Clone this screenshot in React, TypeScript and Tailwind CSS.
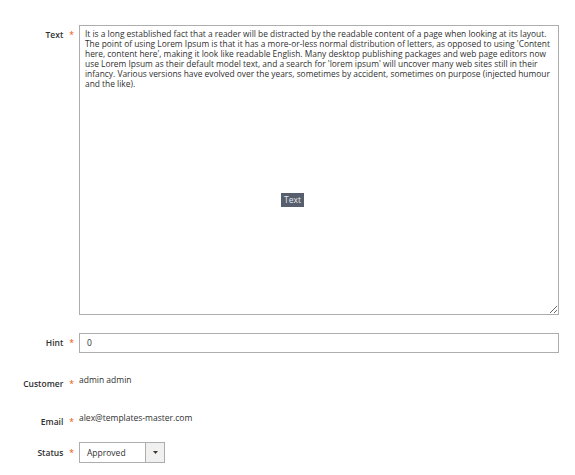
import React from 'react';

const loremText =
  "It is a long established fact that a reader will be distracted by the readable content of a page when looking at its layout. The point of using Lorem Ipsum is that it has a more-or-less normal distribution of letters, as opposed to using 'Content here, content here', making it look like readable English. Many desktop publishing packages and web page editors now use Lorem Ipsum as their default model text, and a search for 'lorem ipsum' will uncover many web sites still in their infancy. Various versions have evolved over the years, sometimes by accident, sometimes on purpose (injected humour and the like).";

interface LabelProps {
  text: string;
  className?: string;
}

const FieldLabel: React.FC<LabelProps> = ({ text, className = '' }) => (
  <div className={`w-[79px] shrink-0 flex justify-end pr-[5px] ${className}`}>
    <span className="font-semibold text-[#303030]">{text}</span>
    <span className="ml-[6px] text-[#eb5202]">*</span>
  </div>
);

const App: React.FC = () => {
  return (
    <div
      className="w-[575px] h-[475px] bg-white text-[8.5px] leading-[10px] text-[#303030] overflow-hidden"
      style={{ fontFamily: '"Open Sans", "Liberation Sans", sans-serif' }}
    >
      <div className="pt-[25px] flex flex-col">
        {/* Text */}
        <div className="flex">
          <FieldLabel text="Text" className="pt-[5px]" />
          <div className="relative">
            <textarea
              readOnly
              defaultValue={loremText}
              className="block w-[480px] h-[290px] border border-[#adadad] pl-[5px] pr-[1px] py-[3px] text-[8.4px] leading-[10px] text-[#303030] outline-none"
              style={{ fontFamily: '"Open Sans", "Liberation Sans", sans-serif' }}
            />
            <div className="absolute left-[202px] top-[168px] h-[14px] px-[3px] bg-[#575e6d] text-[#e6e8ee] text-[8.5px] leading-[14px]">
              Text
            </div>
          </div>
        </div>

        {/* Hint */}
        <div className="flex items-center mt-[18px]">
          <FieldLabel text="Hint" />
          <div className="w-[480px] h-[20px] border border-[#adadad] px-[7px] flex items-center">0</div>
        </div>

        {/* Customer */}
        <div className="flex mt-[22px]">
          <FieldLabel text="Customer" className="pt-[4px]" />
          <span>admin admin</span>
        </div>

        {/* Email */}
        <div className="flex mt-[24px]">
          <FieldLabel text="Email" className="pt-[4px]" />
          <span>alex@templates-master.com</span>
        </div>

        {/* Status */}
        <div className="flex items-center mt-[15px]">
          <FieldLabel text="Status" />
          <div className="w-[86px] h-[21px] border border-[#adadad] flex">
            <div className="flex-1 flex items-center px-[7px]">Approved</div>
            <div className="w-[19px] border-l border-[#adadad] bg-[#f0f0f0] flex items-center justify-center">
              <svg width="5" height="3" viewBox="0 0 5 3">
                <path d="M0 0 L5 0 L2.5 3 Z" fill="#41362f" />
              </svg>
            </div>
          </div>
        </div>
      </div>
    </div>
  );
};

export default App;
